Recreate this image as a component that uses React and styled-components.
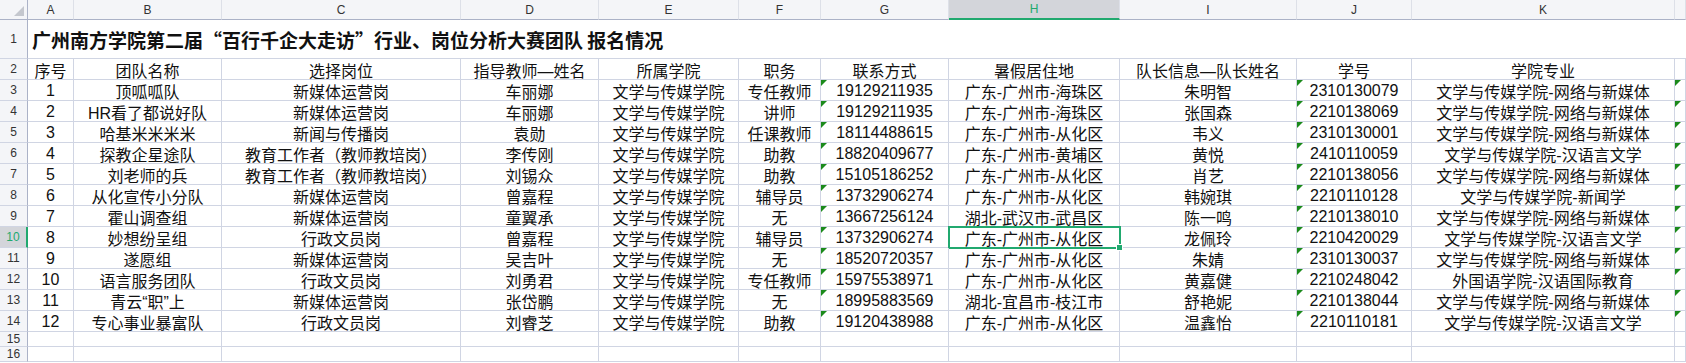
import React from "react";
import styled, { createGlobalStyle, css } from "styled-components";

const Global = createGlobalStyle`
  html, body { margin: 0; padding: 0; background: #fff; overflow: hidden; }
  body { font-family: "Liberation Sans", "Noto Sans CJK SC", sans-serif; }
`;

const COLS = [28, 46, 148, 239, 138, 140, 82, 128, 171, 177, 115, 263, 11];
const LETTERS = ["A", "B", "C", "D", "E", "F", "G", "H", "I", "J", "K", ""];

const GREEN = "#21a96f";
const GRID = "#d0d5e3";
const HEAD_LINE = "#abb2c7";
const HEAD_BG = "#f4f5f8";
const HEAD_SEL = "#d3d5da";

const Sheet = styled.div`
  display: grid;
  grid-template-columns: ${COLS.map((c) => c + "px").join(" ")};
  grid-template-rows: 20px 39px 21px repeat(12, 21px) 15px 15px;
  width: 1686px;
`;

const Corner = styled.div`
  position: relative;
  background: ${HEAD_BG};
  border-right: 1px solid ${HEAD_LINE};
  border-bottom: 1px solid ${HEAD_LINE};
  box-sizing: border-box;
  &::after {
    content: "";
    position: absolute;
    right: 3px;
    bottom: 3px;
    width: 0;
    height: 0;
    border-left: 10px solid transparent;
    border-bottom: 10px solid #c4c7ce;
  }
`;

const ColHeader = styled.div`
  box-sizing: border-box;
  display: flex;
  align-items: center;
  justify-content: center;
  font-family: "Liberation Sans", "DejaVu Sans", sans-serif;
  font-size: 12px;
  color: #333;
  background: ${HEAD_BG};
  border-right: 1px solid #dde0e8;
  border-bottom: 1px solid ${HEAD_LINE};
  ${(p) =>
    p.$selected &&
    css`
      background: ${HEAD_SEL};
      color: ${GREEN};
      border-bottom: 2px solid ${GREEN};
    `}
`;

const RowHeader = styled.div`
  box-sizing: border-box;
  display: flex;
  align-items: center;
  justify-content: center;
  font-family: "Liberation Sans", "DejaVu Sans", sans-serif;
  font-size: 12px;
  color: #333;
  background: ${HEAD_BG};
  border-right: 1px solid ${HEAD_LINE};
  border-bottom: 1px solid ${GRID};
  ${(p) =>
    p.$selected &&
    css`
      background: ${HEAD_SEL};
      color: ${GREEN};
      border-right: 2px solid ${GREEN};
    `}
`;

const Title = styled.div`
  grid-column: 2 / -1;
  box-sizing: border-box;
  display: flex;
  align-items: center;
  padding-left: 4px;
  padding-top: 1px;
  font-family: "Noto Sans CJK SC", sans-serif;
  font-weight: 700;
  font-size: 19px;
  color: #111;
  white-space: nowrap;
  border-bottom: 1px solid ${GRID};
`;

const Cell = styled.div`
  position: relative;
  box-sizing: border-box;
  display: flex;
  align-items: center;
  justify-content: center;
  padding-top: 2px;
  font-size: 16px;
  color: #111;
  white-space: nowrap;
  border-right: 1px solid ${GRID};
  border-bottom: 1px solid ${GRID};
  ${(p) =>
    p.$mark &&
    css`
      &::before {
        content: "";
        position: absolute;
        left: 0;
        top: 0;
        width: 0;
        height: 0;
        border-top: 6px solid #1b8a1b;
        border-right: 6px solid transparent;
      }
    `}
  ${(p) =>
    p.$selected &&
    css`
      &::after {
        content: "";
        position: absolute;
        left: -1px;
        top: -1px;
        right: -2px;
        bottom: -2px;
        border: 2px solid ${GREEN};
        pointer-events: none;
      }
    `}
`;

const Handle = styled.span`
  position: absolute;
  right: -4px;
  bottom: -4px;
  width: 5px;
  height: 5px;
  background: ${GREEN};
  border: 1px solid #fff;
  z-index: 2;
`;

const HEAD = [
  "序号",
  "团队名称",
  "选择岗位",
  "指导教师—姓名",
  "所属学院",
  "职务",
  "联系方式",
  "暑假居住地",
  "队长信息—队长姓名",
  "学号",
  "学院专业",
  "",
];

const ROWS = [
  ["1", "顶呱呱队", "新媒体运营岗", "车丽娜", "文学与传媒学院", "专任教师", "19129211935", "广东-广州市-海珠区", "朱明智", "2310130079", "文学与传媒学院-网络与新媒体"],
  ["2", "HR看了都说好队", "新媒体运营岗", "车丽娜", "文学与传媒学院", "讲师", "19129211935", "广东-广州市-海珠区", "张国森", "2210138069", "文学与传媒学院-网络与新媒体"],
  ["3", "哈基米米米米", "新闻与传播岗", "袁勋", "文学与传媒学院", "任课教师", "18114488615", "广东-广州市-从化区", "韦义", "2310130001", "文学与传媒学院-网络与新媒体"],
  ["4", "探教企星途队", "教育工作者（教师教培岗）", "李传刚", "文学与传媒学院", "助教", "18820409677", "广东-广州市-黄埔区", "黄悦", "2410110059", "文学与传媒学院-汉语言文学"],
  ["5", "刘老师的兵", "教育工作者（教师教培岗）", "刘锡众", "文学与传媒学院", "助教", "15105186252", "广东-广州市-从化区", "肖艺", "2210138056", "文学与传媒学院-网络与新媒体"],
  ["6", "从化宣传小分队", "新媒体运营岗", "曾嘉程", "文学与传媒学院", "辅导员", "13732906274", "广东-广州市-从化区", "韩婉琪", "2210110128", "文学与传媒学院-新闻学"],
  ["7", "霍山调查组", "新媒体运营岗", "童翼承", "文学与传媒学院", "无", "13667256124", "湖北-武汉市-武昌区", "陈一鸣", "2210138010", "文学与传媒学院-网络与新媒体"],
  ["8", "妙想纷呈组", "行政文员岗", "曾嘉程", "文学与传媒学院", "辅导员", "13732906274", "广东-广州市-从化区", "龙佩玲", "2210420029", "文学与传媒学院-汉语言文学"],
  ["9", "遂愿组", "新媒体运营岗", "吴吉叶", "文学与传媒学院", "无", "18520720357", "广东-广州市-从化区", "朱婧", "2310130037", "文学与传媒学院-网络与新媒体"],
  ["10", "语言服务团队", "行政文员岗", "刘勇君", "文学与传媒学院", "专任教师", "15975538971", "广东-广州市-从化区", "黄嘉健", "2210248042", "外国语学院-汉语国际教育"],
  ["11", "青云“职”上", "新媒体运营岗", "张岱鹏", "文学与传媒学院", "无", "18995883569", "湖北-宜昌市-枝江市", "舒艳妮", "2210138044", "文学与传媒学院-网络与新媒体"],
  ["12", "专心事业暴富队", "行政文员岗", "刘睿芝", "文学与传媒学院", "助教", "19120438988", "广东-广州市-从化区", "温鑫怡", "2210110181", "文学与传媒学院-汉语言文学"],
];

const MARK_COLS = [6, 9, 11];
const SEL_ROW = 10;
const SEL_COL = 7;

export default function App() {
  return (
    <>
      <Global />
      <Sheet>
        <Corner />
        {LETTERS.map((l, i) => (
          <ColHeader key={"h" + i} $selected={i === SEL_COL}>
            {l}
          </ColHeader>
        ))}

        <RowHeader>1</RowHeader>
        <Title>广州南方学院第二届“百行千企大走访”行业、岗位分析大赛团队 报名情况</Title>

        <RowHeader>2</RowHeader>
        {HEAD.map((h, i) => (
          <Cell key={"t" + i}>{h}</Cell>
        ))}

        {ROWS.map((r, ri) => {
          const rowNum = ri + 3;
          const vals = [...r, ""];
          return (
            <React.Fragment key={"r" + ri}>
              <RowHeader $selected={rowNum === SEL_ROW}>{rowNum}</RowHeader>
              {vals.map((v, ci) => {
                const sel = rowNum === SEL_ROW && ci === SEL_COL;
                return (
                  <Cell key={ci} $mark={MARK_COLS.includes(ci)} $selected={sel}>
                    {v}
                    {sel && <Handle />}
                  </Cell>
                );
              })}
            </React.Fragment>
          );
        })}

        {[15, 16].map((n) => (
          <React.Fragment key={"e" + n}>
            <RowHeader>{n}</RowHeader>
            {LETTERS.map((_, ci) => (
              <Cell key={ci} />
            ))}
          </React.Fragment>
        ))}
      </Sheet>
    </>
  );
}
